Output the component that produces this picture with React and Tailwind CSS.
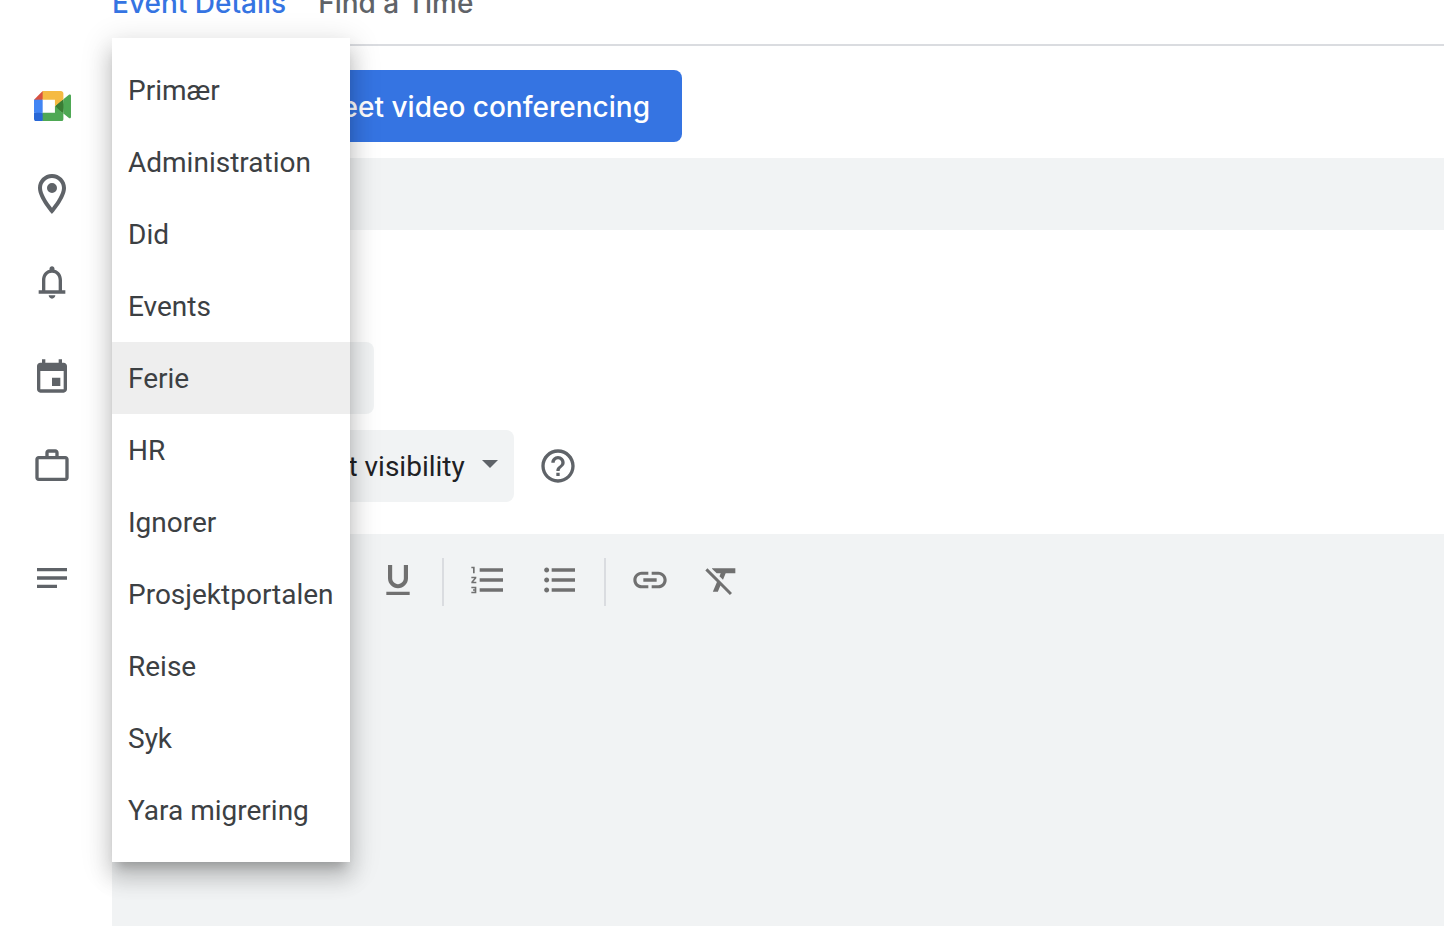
import React, { useState } from "react";

const calendars = [
  "Primær",
  "Administration",
  "Did",
  "Events",
  "Ferie",
  "HR",
  "Ignorer",
  "Prosjektportalen",
  "Reise",
  "Syk",
  "Yara migrering",
];

const icons = {
  bell: "M12 22c1.1 0 2-.9 2-2h-4c0 1.1.9 2 2 2zm6-6v-5c0-3.07-1.63-5.64-4.5-6.32V4c0-.83-.67-1.5-1.5-1.5s-1.5.67-1.5 1.5v.68C7.64 5.36 6 7.92 6 11v6H4v2h16v-2h-2v-1zm-2 1H8v-6c0-2.48 1.51-4.5 4-4.5s4 2.02 4 4.5v6z",
  calendar:
    "M19 4h-1V2h-2v2H8V2H6v2H5c-1.11 0-2 .9-2 2v14c0 1.1.89 2 2 2h14c1.1 0 2-.9 2-2V6c0-1.1-.9-2-2-2zm0 16H5V9h14v11zm-2-7h-5v5h5v-5z",
  briefcase:
    "M20 6h-4V4c0-1.1-.9-2-2-2h-4c-1.1 0-2 .9-2 2v2H4c-1.1 0-2 .9-2 2v11c0 1.1.9 2 2 2h16c1.1 0 2-.9 2-2V8c0-1.1-.9-2-2-2zM10 4h4v2h-4V4zm10 15H4V8h16v11z",
  notes: "M3 18h12v-2H3v2zM3 6v2h18V6H3zm0 7h18v-2H3v2z",
  pin: "M12 2C8.13 2 5 5.13 5 9c0 5.25 7 13 7 13s7-7.75 7-13c0-3.87-3.13-7-7-7zM7 9c0-2.76 2.24-5 5-5s5 2.24 5 5c0 2.88-2.88 7.19-5 9.88C9.92 16.21 7 11.85 7 9zm5-2.5a2.5 2.5 0 1 0 0 5 2.5 2.5 0 0 0 0-5z",
  help: "M11 18h2v-2h-2v2zm1-16C6.48 2 2 6.48 2 12s4.48 10 10 10 10-4.48 10-10S17.52 2 12 2zm0 18c-4.41 0-8-3.59-8-8s3.59-8 8-8 8 3.59 8 8-3.59 8-8 8zm0-14c-2.21 0-4 1.79-4 4h2c0-1.1.9-2 2-2s2 .9 2 2c0 2-3 1.75-3 5h2c0-2.25 3-2.5 3-5 0-2.21-1.79-4-4-4z",
  attach:
    "M16.5 6v11.5c0 2.21-1.79 4-4 4s-4-1.79-4-4V5a2.5 2.5 0 0 1 5 0v10.5c0 .55-.45 1-1 1s-1-.45-1-1V6H10v9.5a2.5 2.5 0 0 0 5 0V5c0-2.21-1.79-4-4-4S7 2.79 7 5v12.5c0 3.04 2.46 5.5 5.5 5.5s5.5-2.46 5.5-5.5V6h-1.5z",
  bold: "M15.6 10.79c.97-.67 1.65-1.77 1.65-2.79 0-2.26-1.75-4-4-4H7v14h7.04c2.09 0 3.71-1.7 3.71-3.79 0-1.52-.86-2.82-2.15-3.42zM10 6.5h3c.83 0 1.5.67 1.5 1.5s-.67 1.5-1.5 1.5h-3v-3zm3.5 9H10v-3h3.5c.83 0 1.5.67 1.5 1.5s-.67 1.5-1.5 1.5z",
  italic: "M10 4v3h2.21l-3.42 8H6v3h8v-3h-2.21l3.42-8H18V4z",
  underline:
    "M12 17c3.31 0 6-2.69 6-6V3h-2.5v8c0 1.93-1.57 3.5-3.5 3.5S8.5 12.93 8.5 11V3H6v8c0 3.31 2.69 6 6 6zm-7 2v2h14v-2H5z",
  numbered:
    "M2 17h2v.5H3v1h1v.5H2v1h3v-4H2v1zm1-9h1V4H2v1h1v3zm-1 3h1.8L2 13.1v.9h3v-1H3.2L5 10.9V10H2v1zm5-6v2h14V5H7zm0 14h14v-2H7v2zm0-6h14v-2H7v2z",
  bulleted:
    "M4 10.5c-.83 0-1.5.67-1.5 1.5s.67 1.5 1.5 1.5 1.5-.67 1.5-1.5-.67-1.5-1.5-1.5zm0-6c-.83 0-1.5.67-1.5 1.5S3.17 7.5 4 7.5 5.5 6.83 5.5 6 4.83 4.5 4 4.5zm0 12c-.83 0-1.5.68-1.5 1.5s.68 1.5 1.5 1.5 1.5-.68 1.5-1.5-.67-1.5-1.5-1.5zM7 19h14v-2H7v2zm0-6h14v-2H7v2zm0-8v2h14V5H7z",
  link: "M3.9 12c0-1.71 1.39-3.1 3.1-3.1h4V7H7c-2.76 0-5 2.24-5 5s2.24 5 5 5h4v-1.9H7c-1.71 0-3.1-1.39-3.1-3.1zM8 13h8v-2H8v2zm9-6h-4v1.9h4c1.71 0 3.1 1.39 3.1 3.1s-1.39 3.1-3.1 3.1h-4V17h4c2.76 0 5-2.24 5-5s-2.24-5-5-5z",
  clear:
    "M3.27 5L2 6.27l6.97 6.97L6.5 19h3l1.57-3.66L16.73 21 18 19.73 3.55 5.27 3.27 5zM6 5v.18L8.82 8h2.4l-.72 1.68 2.1 2.1L14.21 8H20V5H6z",
};

const Icon = ({ name, className = "size-10" }) => (
  <svg viewBox="0 0 24 24" fill="currentColor" aria-hidden="true" className={className}>
    <path d={icons[name]} />
  </svg>
);

const MeetLogo = () => (
  <svg viewBox="0 0 87.5 72" aria-hidden="true" className="w-[37px]">
    <path fill="#3a7d35" d="M49.5 36l8.53 9.75 11.47 7.33 2-17.02-2-16.64-11.69 6.44z" />
    <path fill="#2867d6" d="M0 51.5V66c0 3.315 2.685 6 6 6h14.5l3-10.96-3-9.54-9.95-3z" />
    <path fill="#d85140" d="M20.5 0L0 20.5l10.55 3 9.95-3 2.95-9.41z" />
    <path fill="#4285f4" d="M20.5 20.5H0v31h20.5z" />
    <path
      fill="#4ea854"
      d="M82.6 8.68L69.5 19.42v33.66l13.16 10.79c1.97 1.54 4.85.135 4.85-2.37V11c0-2.535-2.945-3.925-4.91-2.32zM49.5 36v15.5h-29V72h43c3.315 0 6-2.685 6-6V53.08z"
    />
    <path fill="#f5ba42" d="M63.5 0h-43v20.5h29V36l20-16.57V6c0-3.315-2.685-6-6-6z" />
  </svg>
);

const Row = ({ icon, children, className = "" }) => (
  <div className={`flex ${className}`}>
    <div className="flex h-[72px] w-28 shrink-0 items-center justify-center pr-2 text-[#5f6368]">{icon}</div>
    <div className="relative flex min-w-0 grow items-center">{children}</div>
  </div>
);

const SelectBox = ({ label, options, value, onChange, className, arrowClass = "right-4" }) => (
  <div className={`relative h-[72px] rounded-lg bg-[#f1f3f4] ${className}`}>
    <select
      aria-label={label}
      value={value}
      onChange={onChange}
      className="h-full w-full appearance-none pt-0.5 pl-4 text-[28px] text-[#202124] outline-none"
    >
      {options.map((o) => (
        <option key={o}>{o}</option>
      ))}
    </select>
    <svg
      viewBox="0 0 16 8"
      aria-hidden="true"
      className={`pointer-events-none absolute top-[30px] w-4 fill-[#5f6368] ${arrowClass}`}
    >
      <path d="M0 0h16l-8 8z" />
    </svg>
  </div>
);

const ToolButton = ({ name, label }) => (
  <button type="button" aria-label={label} className="flex h-12 w-[72px] items-center justify-center pb-1 text-[#707070]">
    <Icon name={name} />
  </button>
);

const Divider = () => <div className="mx-2 h-12 w-0.5 bg-[#dadce0]" />;

export default function App() {
  const [calendar, setCalendar] = useState("Ferie");
  const [busy, setBusy] = useState("Busy");
  const [visibility, setVisibility] = useState("Default visibility");
  const [location, setLocation] = useState("");

  return (
    <main className="flex min-h-screen flex-col overflow-hidden bg-white font-['Roboto',sans-serif] text-[28px] text-[#3c4043]">
      {/* Tabs, scrolled halfway out of view */}
      <nav className="-mt-4 ml-28 flex h-[62px] gap-8 border-b-2 border-[#dadce0] font-['Inter',sans-serif] text-[28px] leading-[38px] font-medium">
        <a href="#details" className="text-[#3574e2]">
          Event Details
        </a>
        <a href="#time" className="text-[#5f6368]">
          Find a Time
        </a>
      </nav>

      <Row icon={<MeetLogo />} className="mt-6">
        <button
          type="button"
          className="flex h-[72px] w-[570px] items-center justify-end rounded-lg bg-[#3574e2] pt-0.5 pr-8 font-['Inter',sans-serif] text-[28px] font-medium whitespace-nowrap text-white"
        >
          Add Google Meet video conferencing
        </button>
      </Row>

      <Row icon={<Icon name="pin" className="size-12" />} className="mt-4">
        <input
          aria-label="Location"
          value={location}
          onChange={(e) => setLocation(e.target.value)}
          className="h-[72px] w-full bg-[#f1f3f4] px-4 outline-none"
        />
      </Row>

      <Row icon={<Icon name="bell" />} className="mt-4">
        <button type="button" aria-label="Add notification" className="h-[72px] w-[238px]" />
      </Row>

      <Row icon={<Icon name="calendar" className="mb-1 size-10" />} className="mt-6">
        <SelectBox
          label="Calendar"
          options={calendars}
          value={calendar}
          onChange={(e) => setCalendar(e.target.value)}
          className="w-[262px]"
          arrowClass="right-8"
        />
        {/* Open calendar menu */}
        <ul
          role="listbox"
          aria-label="Calendars"
          className="absolute -top-[304px] left-0 z-10 w-[238px] bg-white py-4 shadow-[0_10px_10px_-6px_rgba(0,0,0,0.2),0_16px_20px_2px_rgba(0,0,0,0.14),0_6px_28px_4px_rgba(0,0,0,0.12)]"
        >
          {calendars.map((name) => (
            <li key={name} role="option" aria-selected={name === calendar}>
              <button
                type="button"
                onClick={() => setCalendar(name)}
                className={`block h-[72px] w-full px-4 pt-0.5 text-left whitespace-nowrap ${
                  name === calendar ? "bg-[#eeeeee]" : "bg-white"
                }`}
              >
                {name}
              </button>
            </li>
          ))}
        </ul>
      </Row>

      <Row icon={<Icon name="briefcase" />} className="mt-4">
        <SelectBox
          label="Show as"
          options={["Busy", "Free"]}
          value={busy}
          onChange={(e) => setBusy(e.target.value)}
          className="w-[124px]"
        />
        <SelectBox
          label="Visibility"
          options={["Default visibility", "Public", "Private"]}
          value={visibility}
          onChange={(e) => setVisibility(e.target.value)}
          className="ml-4 w-[262px]"
        />
        <button type="button" aria-label="Help" className="ml-6 text-[#5f6368]">
          <Icon name="help" />
        </button>
      </Row>

      <div className="mt-8 flex grow">
        <div className="flex w-28 shrink-0 justify-center pt-6 pr-2 text-[#5f6368]">
          <Icon name="notes" />
        </div>
        <div className="flex min-w-0 grow flex-col bg-[#f1f3f4]">
          <div className="flex px-4 pt-6">
            <ToolButton name="attach" label="Attach" />
            <Divider />
            <ToolButton name="bold" label="Bold" />
            <ToolButton name="italic" label="Italic" />
            <ToolButton name="underline" label="Underline" />
            <Divider />
            <ToolButton name="numbered" label="Numbered list" />
            <ToolButton name="bulleted" label="Bulleted list" />
            <Divider />
            <ToolButton name="link" label="Insert link" />
            <ToolButton name="clear" label="Remove formatting" />
          </div>
          <textarea aria-label="Description" className="grow resize-none p-4 outline-none" />
        </div>
      </div>
    </main>
  );
}
